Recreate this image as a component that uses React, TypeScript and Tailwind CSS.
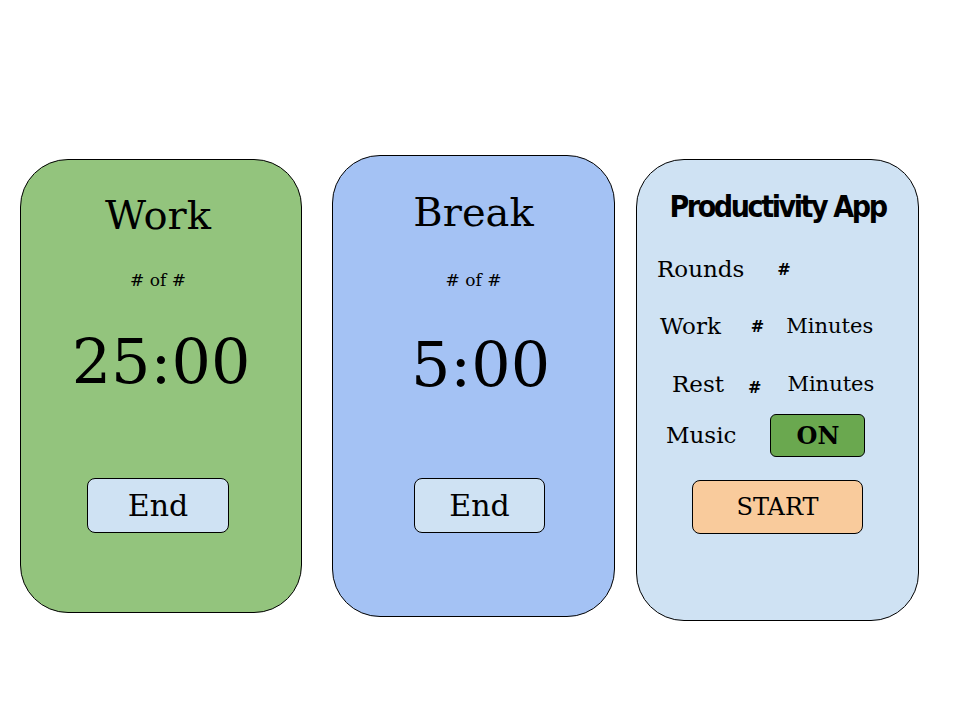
import React from 'react'

const serif = { fontFamily: '"DejaVu Serif", "Liberation Serif", serif' }

function TimerCard({
    title,
    time,
    className,
    subClass,
    timeClass,
    buttonClass,
}: {
    title: string
    time: string
    className: string
    subClass: string
    timeClass: string
    buttonClass: string
}) {
    return (
        <div
            className={`flex flex-col items-center border border-black text-black ${className}`}
            style={serif}
        >
            <div className="text-[40px] leading-none">{title}</div>
            <div className={`text-[17px] leading-none ${subClass}`}># of #</div>
            <div className={`text-[62px] leading-none ${timeClass}`}>{time}</div>
            <div className="flex-1" />
            <button
                className={`h-[55px] rounded-lg border border-black bg-[#cfe2f3] text-[30px] leading-none ${buttonClass}`}
            >
                End
            </button>
        </div>
    )
}

export default function App() {
    return (
        <div className="flex h-[720px] w-[960px] items-start bg-white pl-[20px]">
            <TimerCard
                title="Work"
                time="25:00"
                className="mt-[159px] h-[454px] w-[282px] rounded-[48px] bg-[#93c47d] pr-[6px] pt-[35px]"
                subClass="mt-[37px]"
                timeClass="mt-[42px] ml-[6px]"
                buttonClass="mb-[79px] w-[142px]"
            />
            <TimerCard
                title="Break"
                time="5:00"
                className="ml-[30px] mt-[155px] h-[462px] w-[283px] rounded-[48px] bg-[#a4c2f4] pt-[36px]"
                subClass="mt-[40px]"
                timeClass="mt-[45px] ml-[14px]"
                buttonClass="mb-[83px] ml-[12px] w-[131px]"
            />
            <div
                className="ml-[21px] mt-[159px] flex h-[462px] w-[283px] flex-col rounded-[48px] border border-black bg-[#cfe2f3] text-black"
                style={serif}
            >
                <div
                    className="mt-[32px] text-center text-[30px] font-bold leading-none tracking-[-2.4px]"
                    style={{ fontFamily: '"Liberation Sans Narrow", "DejaVu Sans Condensed", sans-serif' }}
                >
                    Productivity App
                </div>
                <div className="mt-[36px] flex items-center pl-[20px]">
                    <span className="text-[23px] leading-none">Rounds</span>
                    <span className="ml-[33px] text-[16px] font-bold leading-none">#</span>
                </div>
                <div className="mt-[34px] flex items-center pl-[23px]">
                    <span className="text-[23px] leading-none">Work</span>
                    <span className="ml-[30px] text-[16px] font-bold leading-none">#</span>
                    <span className="ml-[22px] text-[21px] leading-none">Minutes</span>
                </div>
                <div className="mt-[35px] flex items-center pl-[35px]">
                    <span className="text-[23px] leading-none">Rest</span>
                    <span className="ml-[24px] mt-[6px] text-[16px] font-bold leading-none">#</span>
                    <span className="ml-[26px] -mt-[1px] text-[21px] leading-none">Minutes</span>
                </div>
                <div className="mt-[18px] flex items-center pl-[29px]">
                    <span className="text-[23px] leading-none">Music</span>
                    <button className="ml-[34px] h-[43px] w-[95px] rounded-md border border-black bg-[#6aa84f] text-[24px] font-bold leading-none">
                        ON
                    </button>
                </div>
                <button className="ml-[55px] mt-[23px] h-[54px] w-[171px] rounded-lg border border-black bg-[#f9cb9c] text-[24px] leading-none">
                    START
                </button>
            </div>
        </div>
    )
}
